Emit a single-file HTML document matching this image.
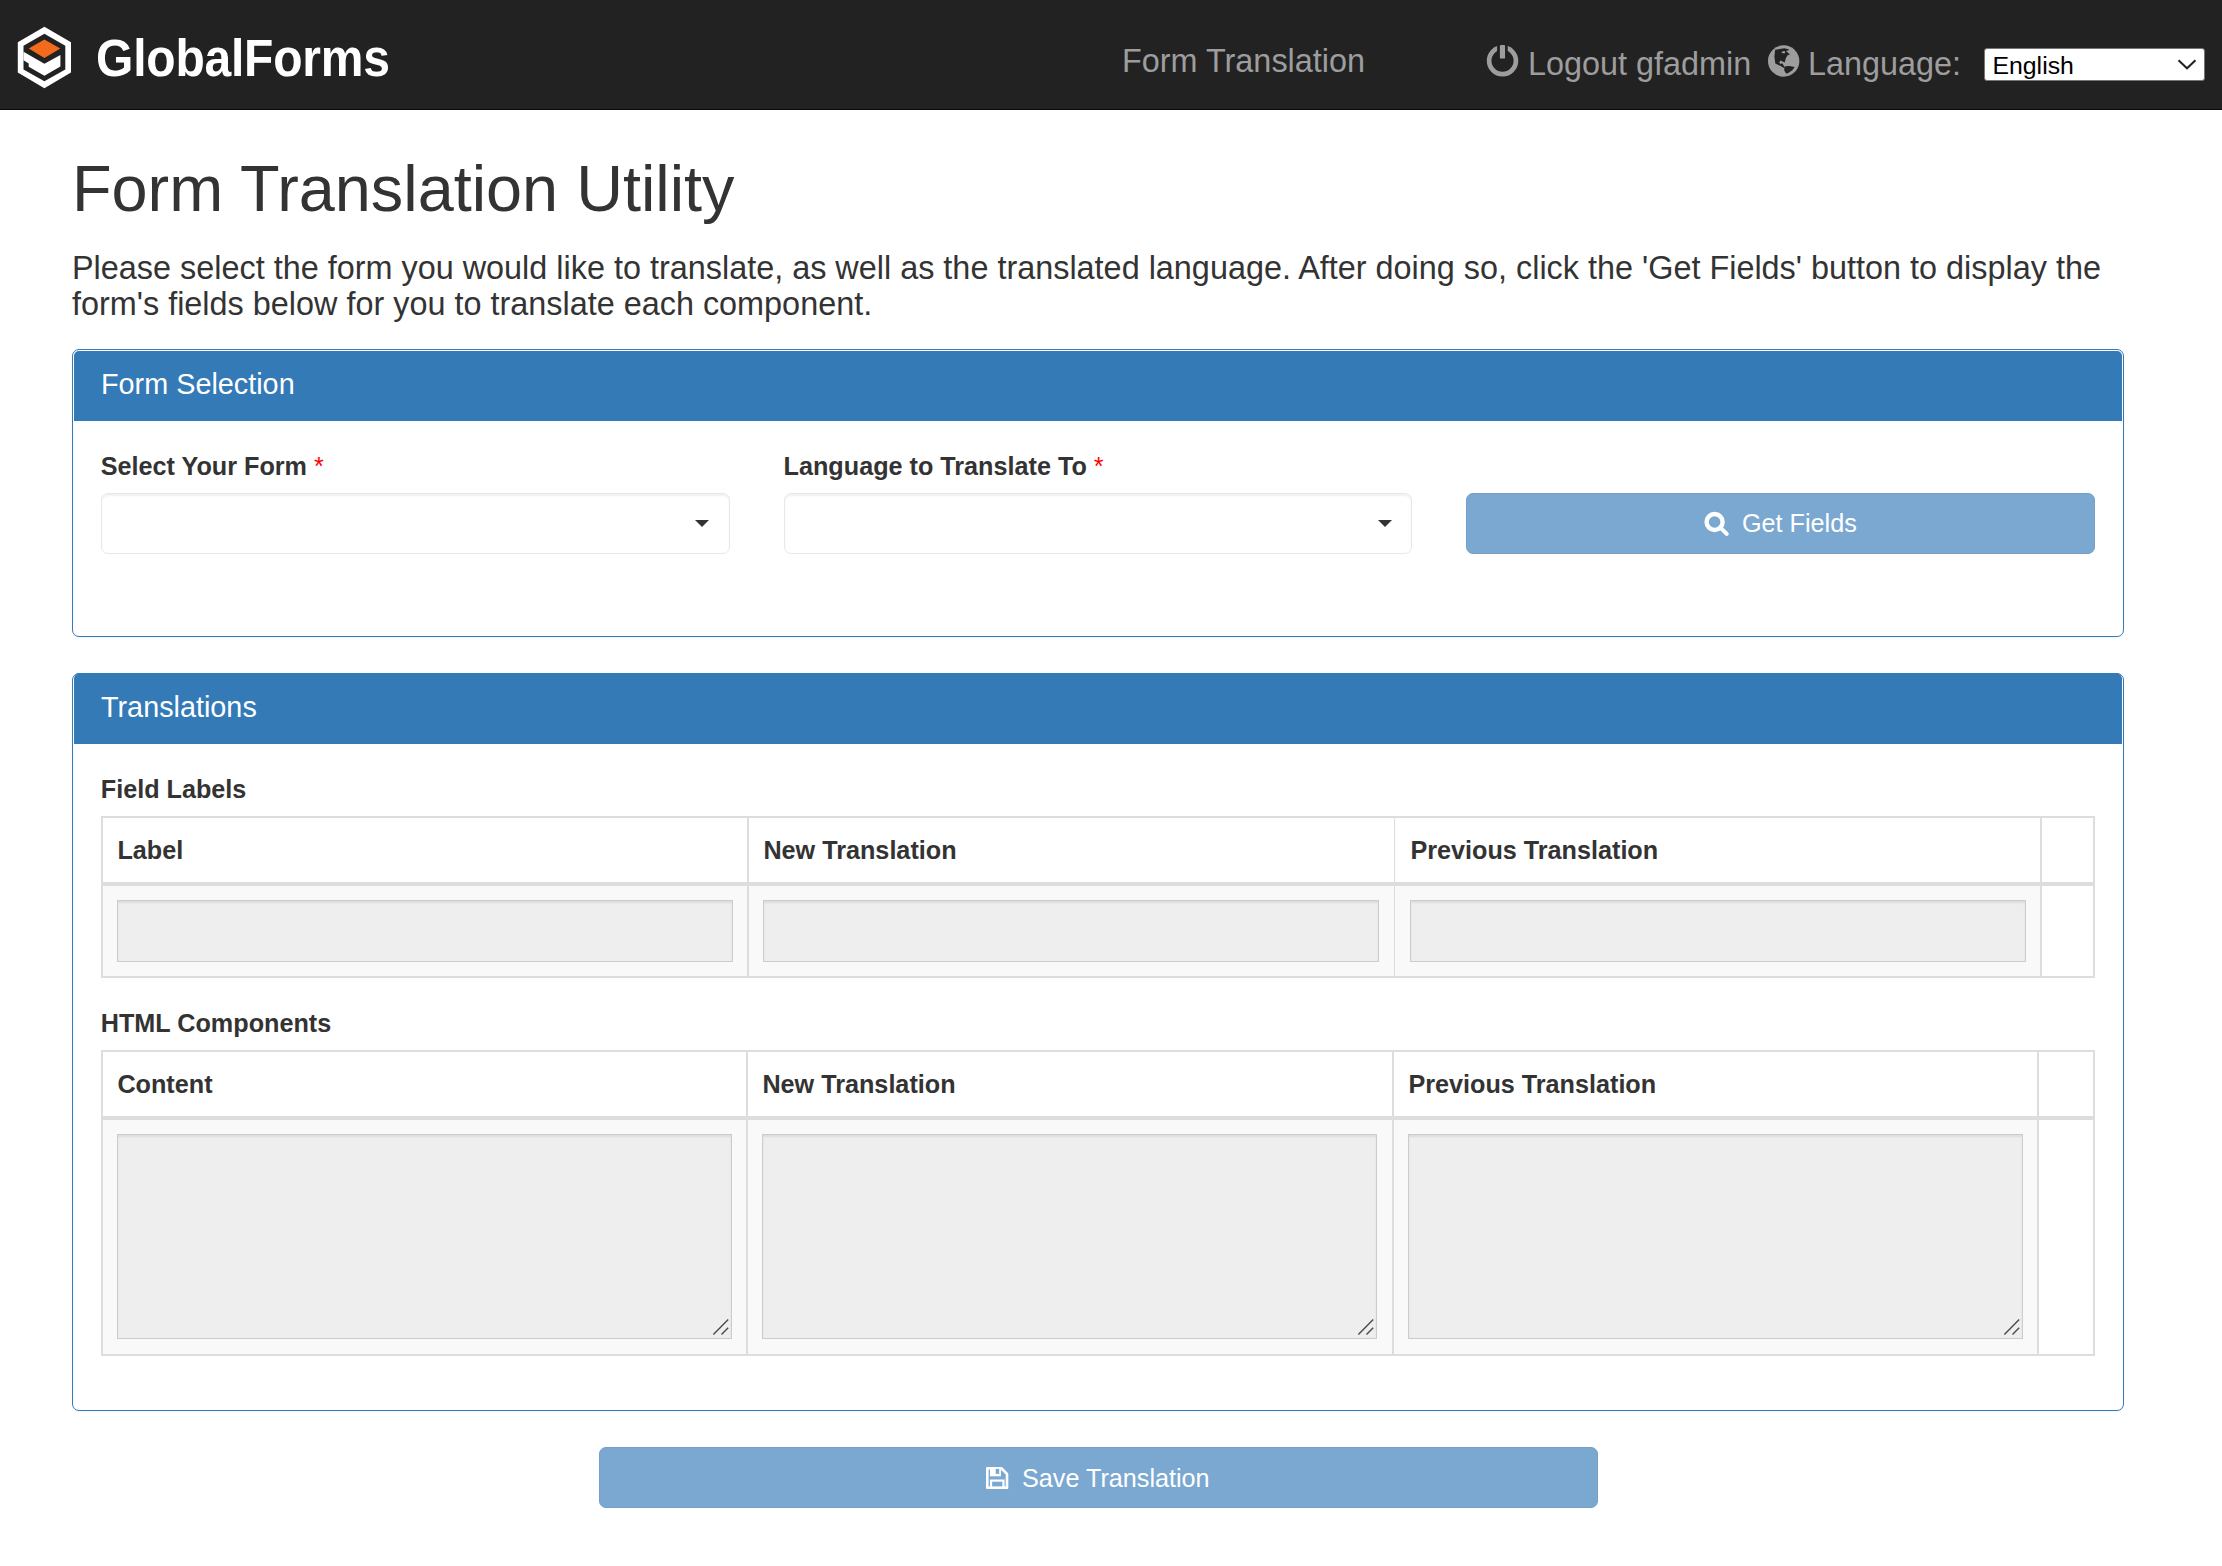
<!DOCTYPE html>
<html lang="en">
<head>
<meta charset="utf-8">
<title>Form Translation Utility</title>
<style>
*{box-sizing:border-box;margin:0;padding:0}
html,body{width:2222px;height:1566px;overflow:hidden;background:#fff}
body{position:relative;font-family:"Liberation Sans",sans-serif;color:#333;font-size:25.2px;line-height:36px}
.abs{position:absolute;white-space:nowrap}
#nav{left:0;top:0;width:2222px;height:110px;background:linear-gradient(#222 0,#222 108.500px,#080808 108.500px,#080808 100%)}
.navt{color:#9d9d9d;font-size:32.4px;line-height:36px}
#brand{left:96.1px;top:31.8px;color:#fff;font-weight:bold;font-size:48px;line-height:56px;letter-spacing:-0.22px;transform:scale(1,1.085);transform-origin:0 44.63px}
#langsel{left:1984px;top:48px;width:221px;height:33px;background:#fff;border:1px solid #767676;border-radius:3px;color:#000;font-size:24.8px;line-height:32px;padding-left:7.5px;padding-top:0.5px}
h1{font-weight:normal;font-size:64.8px;line-height:72px;color:#333}
#lead{left:72px;top:250px;font-size:32.4px;line-height:36px;color:#333}
.panel{border:1px solid #337ab7;border-radius:7px;background:#fff;box-shadow:0 1px 2px rgba(0,0,0,.05)}
.phead{background:#337ab7;color:#fff;font-size:28.8px;line-height:32px;border-radius:5px 5px 0 0}
.lbl{font-weight:bold;font-size:25.2px;line-height:36px;color:#333}
.req{color:#f00;font-weight:normal}
.sel{height:61px;border:1px solid #e8e8e8;border-radius:7px;background:#fff;box-shadow:inset 0 2px 2px rgba(0,0,0,.06)}
.caret{width:0;height:0;border-left:7.5px solid transparent;border-right:7.5px solid transparent;border-top:7.5px solid #333}
.btn{background:#7ba8d1;border:1px solid #749fc6;border-radius:7px;color:#fff;font-size:25.2px;line-height:36px}
.tb{background:#ddd}
.cell{background:#fff}
.cellg{background:#f9f9f9}
.inp{background:#eee;border:1px solid #ccc;box-shadow:inset 0 2px 2px rgba(0,0,0,.075)}
</style>
</head>
<body>
<!-- NAVBAR -->
<div id="nav" class="abs"></div>
<svg class="abs" style="left:0;top:0" width="100" height="110" viewBox="0 0 100 110">
  <polygon points="44.4,26.7 71,42.3 71,72.5 44.4,88.3 17.8,72.5 17.8,42.3" fill="#fff"/>
  <polygon points="44.4,33.7 65.3,45.8 65.3,69.4 44.4,81.3 23.5,69.4 23.5,45.8" fill="#222"/>
  <polygon points="44.4,39.4 60.3,48.5 44.4,58.1 28.7,48.5" fill="#f26a1b"/>
  <polygon points="23.5,51.8 44.4,63.7 60.4,55 60.4,66.5 44.4,75.7 28.7,66.8 28.7,63.4 23.5,60.2" fill="#fff"/>
</svg>
<div id="brand" class="abs">GlobalForms</div>
<div class="abs navt" style="left:1122px;top:43px">Form Translation</div>
<svg class="abs" style="left:1484px;top:42px" width="38" height="38" viewBox="0 0 38 38">
  <circle cx="18.53" cy="18.8" r="13.4" fill="none" stroke="#9d9d9d" stroke-width="4.7"/>
  <rect x="13.1" y="0" width="10.57" height="13" fill="#222"/>
  <rect x="15.9" y="3.05" width="5.14" height="13.5" rx="0.9" fill="#9d9d9d"/>
</svg>
<div class="abs navt" style="left:1528px;top:45.5px">Logout gfadmin</div>
<svg class="abs" style="left:1766px;top:43px" width="36" height="36" viewBox="0 0 36 36">
  <circle cx="17.65" cy="18" r="15.7" fill="#9d9d9d"/>
  <polygon points="9.1,6.8 18.4,5.3 23.1,6.6 22.2,7.6 19.9,7.9 24.0,11.5 21.6,12.3 19.9,15.0 18.7,19.4 16.6,18.5 14.6,17.6 13.1,19.4 14.6,20.9 16.3,20.3 17.5,22.3 19.0,24.4 19.3,23.2 23.4,22.9 28.7,24.1 26.3,27.3 21.9,30.3 20.1,30.5 18.1,27.3 18.4,25.3 14.6,22.9 9.3,20.6 8.4,13.8" fill="#222"/>
  <polygon points="15.2,9.4 17.5,7.9 19.0,8.2 19.0,10.3 16.9,10.3" fill="#9d9d9d"/>
</svg>
<div class="abs navt" style="left:1808px;top:45.5px">Language:</div>
<div id="langsel" class="abs">English</div>
<svg class="abs" style="left:2176px;top:57px" width="22" height="14" viewBox="0 0 22 14"><path d="M2.500 3.200 L11 11.300 L19.500 3.200" fill="none" stroke="#222" stroke-width="2"/></svg>

<!-- HEADING -->
<h1 class="abs" style="left:72px;top:152.5px">Form Translation Utility</h1>
<div id="lead" class="abs">Please select the form you would like to translate, as well as the translated language. After doing so, click the 'Get Fields' button to display the<br>form's fields below for you to translate each component.</div>

<!-- PANEL 1 -->
<div class="abs panel" style="left:72px;top:349px;width:2052px;height:288px"></div>
<div class="abs phead" style="left:74px;top:351px;width:2048px;height:70px;padding:17px 0 0 27px">Form Selection</div>
<div class="abs lbl" style="left:100.800px;top:448px">Select Your Form <span class="req">*</span></div>
<div class="abs sel" style="left:101px;top:493px;width:629px"></div>
<div class="abs caret" style="left:695px;top:520px"></div>
<div class="abs lbl" style="left:783.600px;top:448px">Language to Translate To <span class="req">*</span></div>
<div class="abs sel" style="left:784px;top:493px;width:628px"></div>
<div class="abs caret" style="left:1378px;top:520px"></div>
<div class="abs btn" style="left:1466px;top:493px;width:629px;height:61px"></div>
<svg class="abs" style="left:1700px;top:508px" width="34" height="32" viewBox="0 0 34 32">
  <circle cx="14.6" cy="14" r="8" fill="none" stroke="#fff" stroke-width="4.4"/>
  <line x1="20.6" y1="19.9" x2="26.7" y2="25.9" stroke="#fff" stroke-width="4.1" stroke-linecap="round"/>
</svg>
<div class="abs" style="left:1742px;top:505px;color:#fff;font-size:25.2px;line-height:36px">Get Fields</div>

<!-- PANEL 2 -->
<div class="abs panel" style="left:72px;top:673px;width:2052px;height:738px"></div>
<div class="abs phead" style="left:74px;top:673px;width:2048px;height:71px;padding:18px 0 0 27px;border-radius:6px 6px 0 0">Translations</div>
<div class="abs lbl" style="left:100.800px;top:771px">Field Labels</div>

<!-- TABLE 1 -->
<div class="abs tb" style="left:101px;top:816px;width:1994px;height:162px"></div>
<div class="abs cell" style="left:103px;top:818px;width:644px;height:64px"></div>
<div class="abs cell" style="left:749px;top:818px;width:645px;height:64px"></div>
<div class="abs cell" style="left:1395px;top:818px;width:645px;height:64px"></div>
<div class="abs cell" style="left:2042px;top:818px;width:51px;height:64px"></div>
<div class="abs cellg" style="left:103px;top:886px;width:644px;height:90px"></div>
<div class="abs cellg" style="left:749px;top:886px;width:645px;height:90px"></div>
<div class="abs cellg" style="left:1395px;top:886px;width:645px;height:90px"></div>
<div class="abs cell" style="left:2042px;top:886px;width:51px;height:90px"></div>
<div class="abs lbl" style="left:117.400px;top:832px">Label</div>
<div class="abs lbl" style="left:763.400px;top:832px">New Translation</div>
<div class="abs lbl" style="left:1410.400px;top:832px">Previous Translation</div>
<div class="abs inp" style="left:117px;top:900px;width:616px;height:62px"></div>
<div class="abs inp" style="left:763px;top:900px;width:616px;height:62px"></div>
<div class="abs inp" style="left:1410px;top:900px;width:616px;height:62px"></div>

<div class="abs lbl" style="left:100.800px;top:1005px">HTML Components</div>

<!-- TABLE 2 -->
<div class="abs tb" style="left:101px;top:1050px;width:1994px;height:306px"></div>
<div class="abs cell" style="left:103px;top:1052px;width:643px;height:64px"></div>
<div class="abs cell" style="left:748px;top:1052px;width:644px;height:64px"></div>
<div class="abs cell" style="left:1394px;top:1052px;width:643px;height:64px"></div>
<div class="abs cell" style="left:2039px;top:1052px;width:54px;height:64px"></div>
<div class="abs cellg" style="left:103px;top:1120px;width:643px;height:234px"></div>
<div class="abs cellg" style="left:748px;top:1120px;width:644px;height:234px"></div>
<div class="abs cellg" style="left:1394px;top:1120px;width:643px;height:234px"></div>
<div class="abs cell" style="left:2039px;top:1120px;width:54px;height:234px"></div>
<div class="abs lbl" style="left:117.400px;top:1066px">Content</div>
<div class="abs lbl" style="left:762.400px;top:1066px">New Translation</div>
<div class="abs lbl" style="left:1408.400px;top:1066px">Previous Translation</div>
<div class="abs inp" style="left:117px;top:1134px;width:615px;height:205px"></div>
<div class="abs inp" style="left:762px;top:1134px;width:615px;height:205px"></div>
<div class="abs inp" style="left:1408px;top:1134px;width:615px;height:205px"></div>
<svg class="abs" style="left:710px;top:1316px" width="22" height="22" viewBox="0 0 22 22"><path d="M3.400 18.400 L18.200 3.600 M11.500 18.400 L18.200 11.800" stroke="#4a4a4a" stroke-width="1.400" fill="none"/></svg>
<svg class="abs" style="left:1355px;top:1316px" width="22" height="22" viewBox="0 0 22 22"><path d="M3.400 18.400 L18.200 3.600 M11.500 18.400 L18.200 11.800" stroke="#4a4a4a" stroke-width="1.400" fill="none"/></svg>
<svg class="abs" style="left:2001px;top:1316px" width="22" height="22" viewBox="0 0 22 22"><path d="M3.400 18.400 L18.200 3.600 M11.500 18.400 L18.200 11.800" stroke="#4a4a4a" stroke-width="1.400" fill="none"/></svg>

<!-- SAVE BUTTON -->
<div class="abs btn" style="left:599px;top:1447px;width:999px;height:61px"></div>
<svg class="abs" style="left:984px;top:1465px" width="28" height="28" viewBox="0 0 28 28">
  <path d="M3.3 3.3 H17.3 L23 8.9 V22.75 H3.3 Z" fill="none" stroke="#fff" stroke-width="2.6" stroke-linejoin="round"/>
  <rect x="5.95" y="2.6" width="11" height="8.7" fill="#fff"/>
  <rect x="11.7" y="3.9" width="3.5" height="5" fill="#7ba8d1"/>
  <rect x="7.05" y="15.6" width="12.4" height="7.3" fill="none" stroke="#fff" stroke-width="2.2"/>
</svg>
<div class="abs" style="left:1022px;top:1459.500px;color:#fff;font-size:25.2px;line-height:36px">Save Translation</div>
</body>
</html>
